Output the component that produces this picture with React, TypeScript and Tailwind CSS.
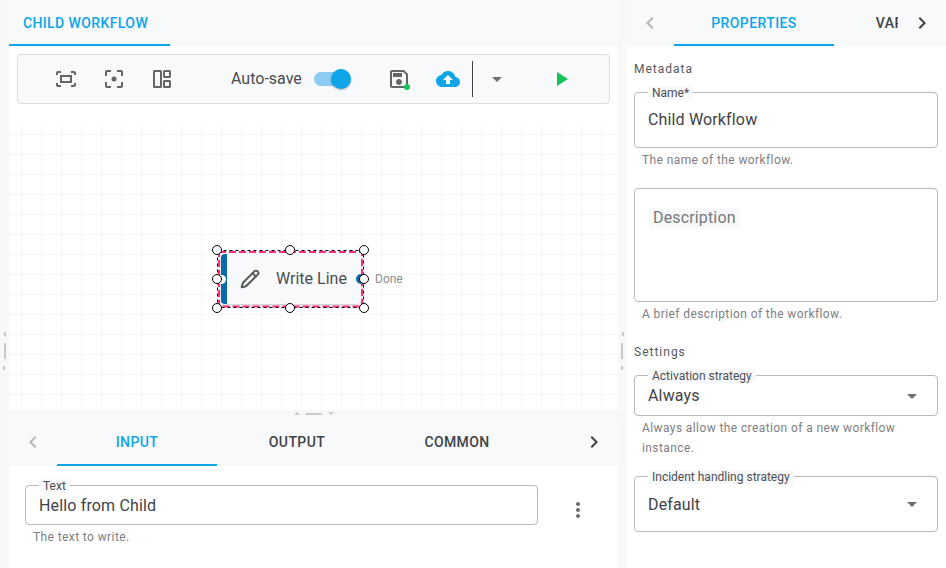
import { ReactNode } from "react";
import { Pencil } from "lucide-react";

const Icon = ({ d, className }: { d: string; className: string }) => (
  <svg viewBox="0 0 24 24" fill="currentColor" className={className}>
    <path d={d} />
  </svg>
);

const CHEVRON_LEFT = "M15.41 7.41 14 6l-6 6 6 6 1.41-1.41L10.83 12z";
const CHEVRON_RIGHT = "M10 6 8.59 7.41 13.17 12l-4.58 4.59L10 18l6-6z";
const DROP = "M7 10l5 5 5-5z";

function ScrollBtn({ dir }: { dir: "left" | "right" }) {
  return (
    <div className="w-12 flex-none flex items-center justify-center">
      <Icon
        d={dir === "left" ? CHEVRON_LEFT : CHEVRON_RIGHT}
        className={dir === "left" ? "w-6 h-6 text-[#b4b5b7]" : "w-6 h-6 text-[#3f4246]"}
      />
    </div>
  );
}

function Tab({ label, active, className = "" }: { label: string; active?: boolean; className?: string }) {
  const color = active ? "border-[#0ea5e9] text-[#0ea5e9]" : "border-transparent text-[#3f4246]";
  return (
    <div
      className={
        "w-40 flex-none h-full flex items-center justify-center border-b-2 text-sm font-medium tracking-[0.4px] " +
        color +
        " " +
        className
      }
    >
      {label}
    </div>
  );
}

function Outlined({
  label,
  className,
  children,
}: {
  label: string;
  className: string;
  children: ReactNode;
}) {
  return (
    <div className={"relative rounded border border-[#b9b9b9] " + className}>
      <span className="absolute left-[13px] -top-[7px] bg-[#f8f9fa] px-1 text-xs leading-[14px] text-[#4b4e52] whitespace-nowrap">
        {label}
      </span>
      {children}
    </div>
  );
}

function Helper({ children }: { children: ReactNode }) {
  return (
    <p className="mx-2 mt-[2px] text-xs leading-5 tracking-[0.4px] text-[#7d8083]">{children}</p>
  );
}

function Section({ children }: { children: ReactNode }) {
  return <p className="text-xs leading-4 tracking-[1px] text-[#55585c]">{children}</p>;
}

function Handle({ className }: { className: string }) {
  return (
    <span
      className={
        "absolute w-[10px] h-[10px] rounded-full bg-white border border-black " + className
      }
    />
  );
}

function WriteLineNode() {
  return (
    <div className="absolute left-[208px] top-[125px] w-[147px] h-[58px]">
      <div className="absolute left-[4px] top-[4px] w-[140px] h-[50px] bg-[#f8f9fa] rounded shadow-[0_1px_3px_rgba(0,0,0,0.25)] flex items-center overflow-hidden">
        <div className="w-[6px] h-full bg-[#0b6aa8]" />
        <Pencil size={20} strokeWidth={2.3} className="ml-[13px] text-[#54575a]" />
        <span className="ml-[16px] text-base text-[#4a4d50]">Write Line</span>
      </div>
      <svg className="absolute inset-0 w-full h-full" viewBox="0 0 147 58" fill="none">
        <rect x="2" y="2" width="143" height="54.5" stroke="#ff2a7f" strokeWidth="2" strokeDasharray="7 3" />
        <rect x="0.5" y="0.5" width="146" height="57" stroke="#000" strokeWidth="1" strokeDasharray="3 3" />
      </svg>
      <span className="absolute left-[139px] top-[24px] w-[10px] h-[10px] rounded-full bg-[#0b6aa8]" />
      <span className="absolute left-0 top-[25px] w-[9px] h-[9px] rounded-full bg-white" />
      <Handle className="-left-[5px] -top-[5px]" />
      <Handle className="left-[68px] -top-[5px]" />
      <Handle className="left-[142px] -top-[5px]" />
      <Handle className="-left-[5px] top-[24px]" />
      <Handle className="left-[142px] top-[24px]" />
      <Handle className="-left-[5px] top-[53px]" />
      <Handle className="left-[68px] top-[53px]" />
      <Handle className="left-[142px] top-[53px]" />
      <span className="absolute left-[158px] top-[22px] text-xs leading-[14px] text-[#8b8e91]">
        Done
      </span>
    </div>
  );
}

function Toolbar() {
  return (
    <div className="h-[50px] rounded border border-[#dcdde0] bg-[#f8f9fa] flex items-center text-[#636568]">
      <Icon
        d="M17 4h3c1.1 0 2 .9 2 2v2h-2V6h-3V4zM4 8V6h3V4H4c-1.1 0-2 .9-2 2v2h2zm16 8v2h-3v2h3c1.1 0 2-.9 2-2v-2h-2zM7 18H4v-2H2v2c0 1.1.9 2 2 2h3v-2zM6 16h12V8H6v8zm2-6h8v4H8v-4z"
        className="w-6 h-6 ml-[36px]"
      />
      <Icon
        d="M5 15H3v4c0 1.1.9 2 2 2h4v-2H5v-4zM5 5h4V3H5c-1.1 0-2 .9-2 2v4h2V5zm14-2h-4v2h4v4h2V5c0-1.1-.9-2-2-2zm0 16h-4v2h4c1.1 0 2-.9 2-2v-4h-2v4zM12 9.5a2.5 2.5 0 1 0 0 5 2.5 2.5 0 0 0 0-5z"
        className="w-6 h-6 ml-[24px]"
      />
      <svg viewBox="0 0 24 24" fill="none" stroke="currentColor" strokeWidth="2" className="w-6 h-6 ml-[24px]">
        <rect x="4" y="4" width="7" height="16" rx="0.5" />
        <rect x="14" y="4" width="6" height="6" rx="0.5" />
        <rect x="14" y="14" width="6" height="6" rx="0.5" />
      </svg>
      <span className="ml-[57px] text-base text-[#4a4d50]">Auto-save</span>
      <div className="relative ml-[12px] w-[37px] h-[20px] flex items-center">
        <div className="w-[36px] h-[14px] rounded-full bg-[#8ccbf3]" />
        <span className="absolute right-0 top-0 w-5 h-5 rounded-full bg-[#0ea5e9] shadow-[0_1px_2px_rgba(0,0,0,0.3)]" />
      </div>
      <div className="relative ml-[36px] w-6 h-6">
        <Icon
          d="M17 3H5c-1.11 0-2 .9-2 2v14c0 1.1.89 2 2 2h14c1.1 0 2-.9 2-2V7l-4-4zm2 16H5V5h11.17L19 7.83V19zm-7-7c-1.66 0-3 1.34-3 3s1.34 3 3 3 3-1.34 3-3-1.34-3-3-3zM6 6h9v4H6z"
          className="w-6 h-6"
        />
        <span className="absolute right-[1px] bottom-[1px] w-[6px] h-[6px] rounded-full bg-[#16c25a]" />
      </div>
      <Icon
        d="M19.35 10.04C18.67 6.59 15.64 4 12 4 9.11 4 6.6 5.64 5.35 8.04 2.34 8.36 0 10.91 0 14c0 3.31 2.69 6 6 6h13c2.76 0 5-2.24 5-5 0-2.64-2.05-4.78-4.65-4.96zM14 13v4h-4v-4H7l5-5 5 5h-3z"
        className="w-6 h-6 ml-[25px] text-[#0ea5e9]"
      />
      <div className="ml-[12px] w-px h-9 bg-[#3f4246]" />
      <Icon d={DROP} className="w-6 h-6 ml-[12px] text-[#6d6f72]" />
      <Icon d="M8 5v14l11-7z" className="w-6 h-6 ml-[40px] text-[#16c25a]" />
    </div>
  );
}

function LeftPanel() {
  return (
    <div className="w-[609px] flex-none flex flex-col bg-white">
      <div className="h-[46px] flex-none bg-[#f8f9fa] flex">
        <Tab label="CHILD WORKFLOW" active className="pr-2 pt-px w-[161px]" />
      </div>
      <div className="flex-none px-2 pt-2 pb-[21px]">
        <Toolbar />
      </div>
      <div className="relative flex-1 bg-[linear-gradient(#f6f6f6_1px,transparent_1px),linear-gradient(90deg,#f6f6f6_1px,transparent_1px)] bg-[size:20px_20px] bg-[position:12px_9px]">
        <WriteLineNode />
      </div>
      <div className="h-[7px] flex-none bg-[#f8f8f8] flex items-center justify-center gap-[6px]">
        <span className="w-0 h-0 border-x-[3px] border-x-transparent border-b-[3px] border-b-[#c9c9c9]" />
        <span className="w-4 h-0.5 bg-[#c9c9c9]" />
        <span className="w-0 h-0 border-x-[3px] border-x-transparent border-t-[3px] border-t-[#c9c9c9]" />
      </div>
      <div className="h-[49px] flex-none bg-[#f8f9fa] flex">
        <ScrollBtn dir="left" />
        <Tab label="INPUT" active className="pt-0.5" />
        <Tab label="OUTPUT" className="pt-0.5" />
        <Tab label="COMMON" className="pt-0.5" />
        <div className="flex-1" />
        <ScrollBtn dir="right" />
      </div>
      <div className="h-[102px] flex-none px-4 pt-[19px]">
        <div className="flex">
          <Outlined label="Text" className="w-[513px] h-[40px] flex items-center px-[13px] pt-0.5">
            <span className="text-base tracking-[0.15px] text-[#3f4246]">Hello from Child</span>
          </Outlined>
          <Icon
            d="M12 8c1.1 0 2-.9 2-2s-.9-2-2-2-2 .9-2 2 .9 2 2 2zm0 2c-1.1 0-2 .9-2 2s.9 2 2 2 2-.9 2-2-.9-2-2-2zm0 6c-1.1 0-2 .9-2 2s.9 2 2 2 2-.9 2-2-.9-2-2-2z"
            className="w-6 h-6 ml-[28px] mt-[13px] text-[#6d6f72]"
          />
        </div>
        <Helper>The text to write.</Helper>
      </div>
    </div>
  );
}

function RightPanel() {
  return (
    <div className="w-[320px] flex-none flex flex-col bg-white">
      <div className="h-[46px] flex-none bg-[#f8f9fa] flex">
        <ScrollBtn dir="left" />
        <div className="w-[224px] flex-none flex overflow-hidden">
          <Tab label="PROPERTIES" active className="pt-px" />
          <Tab label="VARIABLES" className="pt-px" />
        </div>
        <ScrollBtn dir="right" />
      </div>
      <div className="flex-1 px-2 pt-[15px]">
        <Section>Metadata</Section>
        <Outlined label="Name*" className="mt-[15px] h-[56px] flex items-center px-[13px]">
          <span className="text-base tracking-[0.15px] text-[#3f4246]">Child Workflow</span>
        </Outlined>
        <Helper>The name of the workflow.</Helper>
        <div className="mt-[18px] h-[114px] rounded border border-[#b9b9b9] pl-[14px] pt-[19px]">
          <span className="bg-[#f8f9fa] px-1 text-base leading-5 tracking-[0.15px] block w-fit text-[#75787b]">
            Description
          </span>
        </div>
        <Helper>A brief description of the workflow.</Helper>
        <div className="mt-[20px]">
          <Section>Settings</Section>
        </div>
        <Outlined label="Activation strategy" className="mt-[15px] h-[41px] flex items-center justify-between px-[13px]">
          <span className="text-base tracking-[0.15px] text-[#3f4246]">Always</span>
          <Icon d={DROP} className="w-6 h-6 text-[#6d6f72]" />
        </Outlined>
        <Helper>Always allow the creation of a new workflow instance.</Helper>
        <Outlined label="Incident handling strategy" className="mt-[18px] h-[56px] flex items-center justify-between px-[13px]">
          <span className="text-base tracking-[0.15px] text-[#3f4246] mt-0.5">Default</span>
          <Icon d={DROP} className="w-6 h-6 text-[#6d6f72]" />
        </Outlined>
      </div>
    </div>
  );
}

function VerticalGrip({ className }: { className: string }) {
  return (
    <div className={"flex-none bg-[#f8f8f8] flex flex-col items-center justify-center gap-[6px] " + className}>
      <span className="w-0 h-0 border-y-[3px] border-y-transparent border-r-[3px] border-r-[#c9c9c9]" />
      <span className="w-0.5 h-4 bg-[#c9c9c9]" />
      <span className="w-0 h-0 border-y-[3px] border-y-transparent border-l-[3px] border-l-[#c9c9c9]" />
    </div>
  );
}

export default function App() {
  return (
    <div className="w-[946px] h-[568px] flex overflow-hidden bg-[#f8f8f8] font-['Roboto',sans-serif]">
      <VerticalGrip className="w-[9px] h-full pt-[134px]" />
      <LeftPanel />
      <VerticalGrip className="w-[8px] h-full pt-[134px]" />
      <RightPanel />
    </div>
  );
}
